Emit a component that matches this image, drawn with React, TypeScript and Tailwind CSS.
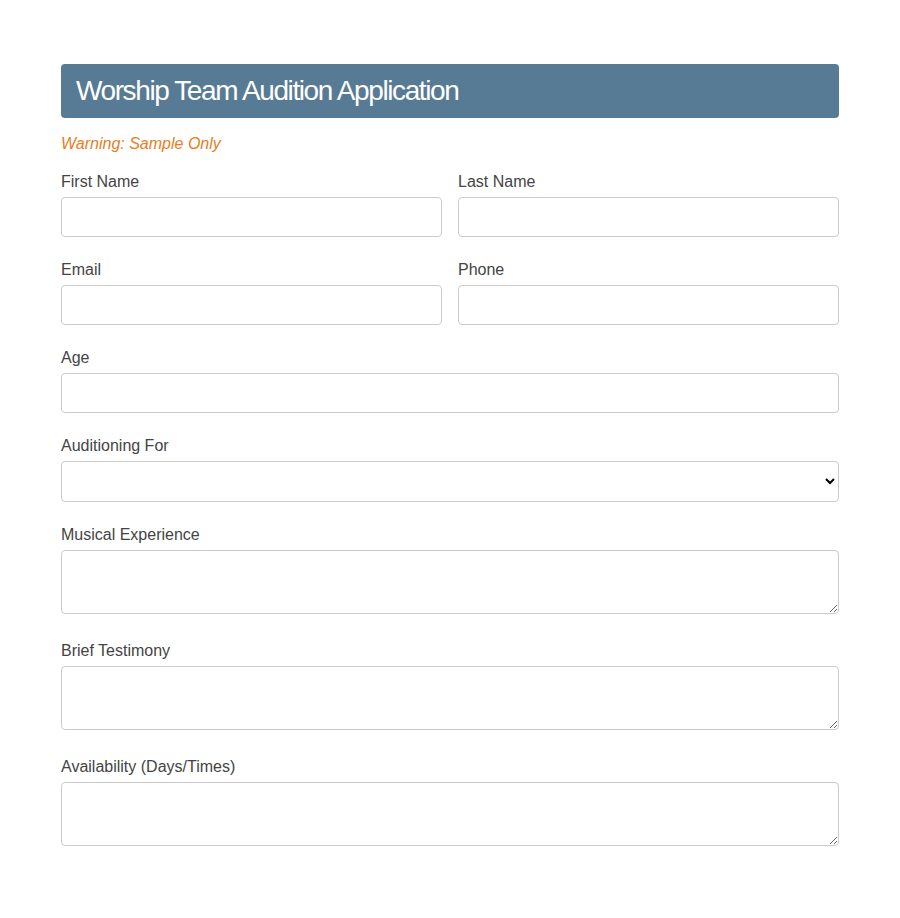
import React from "react";

function Field({ label, children, extra }: { label: string; children: React.ReactNode; extra?: boolean }) {
  return (
    <div className={extra ? "flex flex-col mb-6" : "flex flex-col mb-5"}>
      <label className="text-[16px] leading-6 text-[#444] pt-px mb-[3px]">{label}</label>
      {children}
    </div>
  );
}

const inputCls = "block w-full h-10 rounded border border-[#ccc] bg-white px-3 text-[16px] outline-none";
const areaCls = "block w-full h-16 rounded border border-[#ccc] bg-white px-3 py-2 text-[16px] outline-none resize-y";

export default function App() {
  return (
    <div className="min-h-[918px] bg-white" style={{ fontFamily: '"Liberation Sans", Arial, sans-serif' }}>
      <div className="w-[778px] ml-[61px] pt-16">
        <div className="h-[54px] rounded bg-[#577a95] flex items-center px-[15px] mb-[13px]">
          <h1 className="text-white text-[28px] tracking-[-1.4px] leading-none">Worship Team Audition Application</h1>
        </div>
        <p className="italic text-[#e67e22] text-[16px] leading-6 pt-px mb-[13px]">Warning: Sample Only</p>
        <div className="grid grid-cols-2 gap-x-4">
          <Field label="First Name"><input className={inputCls} /></Field>
          <Field label="Last Name"><input className={inputCls} /></Field>
          <Field label="Email"><input className={inputCls} /></Field>
          <Field label="Phone"><input className={inputCls} /></Field>
        </div>
        <Field label="Age"><input className={inputCls} /></Field>
        <Field label="Auditioning For">
          <select className="block w-full h-[41px] rounded border border-[#ccc] bg-white px-2 text-[16px] outline-none">
            <option></option>
          </select>
        </Field>
        <Field label="Musical Experience" extra><textarea className={areaCls} /></Field>
        <Field label="Brief Testimony" extra><textarea className={areaCls} /></Field>
        <Field label="Availability (Days/Times)" extra><textarea className={areaCls} /></Field>
      </div>
    </div>
  );
}
